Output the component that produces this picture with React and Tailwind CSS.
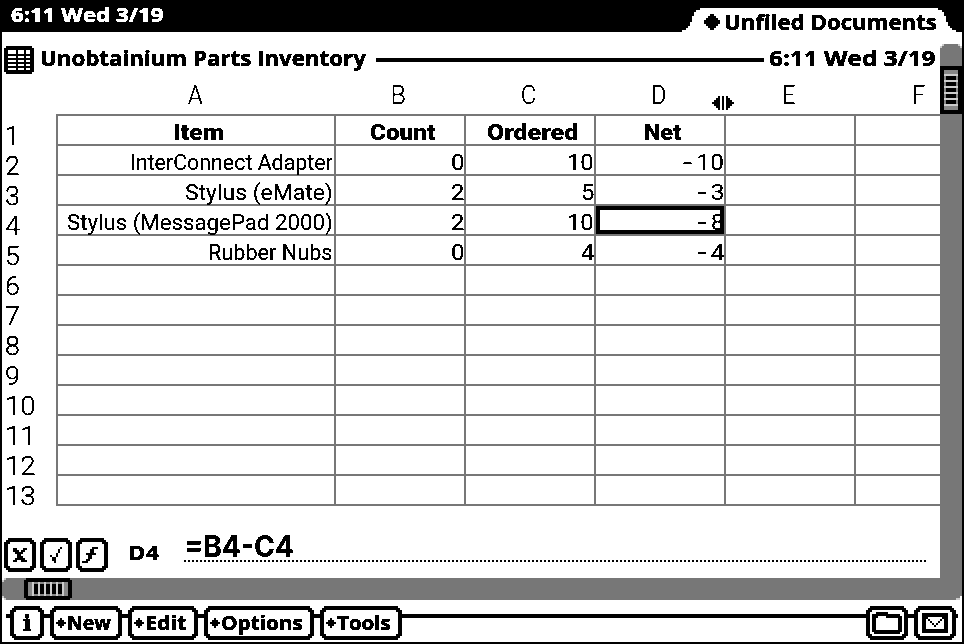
import React, { useLayoutEffect, useRef, useState } from "react";

// Text stretched horizontally so that it fills exactly `w` pixels.
// The #bitmap filter drops the anti-aliasing for a one-bit LCD look.
function Fit({ w, className = "", children }) {
  const ref = useRef(null);
  const [k, setK] = useState(1);
  useLayoutEffect(() => {
    setK(w / ref.current.offsetWidth);
  }, [w]);
  return (
    <span className="inline-flex shrink-0 justify-start whitespace-pre [filter:url(#bitmap)]" style={{ width: w }}>
      <span ref={ref} className={"block shrink-0 origin-left " + className} style={{ transform: `scaleX(${k})` }}>
        {children}
      </span>
    </span>
  );
}

const UI = "font-['Open_Sans',sans-serif] font-bold [-webkit-text-stroke:0.3px_currentColor]";
const CELL = "font-['Roboto',sans-serif]";
const LABEL = "font-['Roboto',sans-serif] text-[25px] font-light leading-[30px] [-webkit-text-stroke:0.15px_black]";

const columns = [
  { name: "A", width: "w-[278px]", w: 15 },
  { name: "B", width: "w-[130px]", w: 15 },
  { name: "C", width: "w-[130px]", w: 15 },
  { name: "D", width: "w-[130px]", w: 15 },
  { name: "E", width: "w-[130px]", w: 13 },
  { name: "F", width: "w-[130px]", w: 13 },
];

const data = [
  [["Item", 51], ["Count", 65], ["Ordered", 91], ["Net", 37]],
  [["InterConnect Adapter", 203], ["0", 13], ["10", 27], ["-10", 42]],
  [["Stylus (eMate)", 148], ["2", 13], ["5", 13], ["-3", 28]],
  [["Stylus (MessagePad 2000)", 266], ["2", 13], ["10", 27], ["-8", 28]],
  [["Rubber Nubs", 125], ["0", 13], ["4", 13], ["-4", 28]],
];

// Stair-stepped outline shared by all the buttons.
function Frame({ w, h = 34, children, className = "" }) {
  const outer = `M4 0H${w - 4}V2H${w - 2}V4H${w}V${h - 4}H${w - 2}V${h - 2}H${w - 4}V${h}H4V${h - 2}H2V${h - 4}H0V4H2V2H4Z`;
  const inner = `M6 4H${w - 6}V6H${w - 4}V${h - 6}H${w - 6}V${h - 4}H6V${h - 6}H4V6H6Z`;
  return (
    <div className={"relative flex shrink-0 items-center " + className} style={{ width: w, height: h }}>
      <svg className="absolute inset-0" width={w} height={h} shapeRendering="crispEdges">
        <path d={outer} />
        <path d={inner} fill="white" />
      </svg>
      <div className="relative flex h-full w-full items-center">{children}</div>
    </div>
  );
}

function MenuButton({ w, tw, label }) {
  return (
    <Frame w={w}>
      <svg className="ml-[6px] shrink-0" width="10" height="10" viewBox="0 0 5 5" shapeRendering="crispEdges">
        <path d="M2 0h1v1h1v1h1v1h-1v1h-1v1h-1v-1h-1v-1h-1v-1h1v-1h1z" />
      </svg>
      <span className="ml-[1px] flex"><Fit w={tw} className={UI + " text-[19px] leading-[32px]"}>{label}</Fit></span>
    </Frame>
  );
}

export default function App() {
  return (
    <div className="flex h-[644px] w-[964px] flex-col overflow-hidden bg-black text-black">
      <svg className="absolute" width="0" height="0">
        <filter id="bitmap" x="-5%" y="-5%" width="110%" height="110%" colorInterpolationFilters="sRGB">
          <feComponentTransfer>
            <feFuncA type="discrete" tableValues="0 0 1 1 1" />
          </feComponentTransfer>
        </filter>
      </svg>

      <header className="flex h-8 shrink-0 items-end justify-between text-white">
        <div className="flex h-8 items-start pl-[11px]">
          <Fit w={152} className={UI + " text-[19.5px] leading-[30px]"}>6:11 Wed 3/19</Fit>
        </div>
        <div className="relative mr-[2px] h-6 w-[280px] shrink-0 text-black">
          <svg className="absolute inset-0" width="280" height="24" shapeRendering="crispEdges">
            <path fill="white" d="M0 24V22H4V20H6V18H8V14H10V8H12V4H14V2H18V0H256V2H260V4H262V8H264V14H266V18H268V20H270V22H274V24Z" />
          </svg>
          <div className="relative flex h-full items-start pl-[22px]">
            <svg className="mt-[6px]" width="16" height="16" viewBox="0 0 8 8" shapeRendering="crispEdges">
              <path d="M3 0h2v1h1v1h1v1h1v2h-1v1h-1v1h-1v1h-2v-1h-1v-1h-1v-1h-1v-2h1v-1h1v-1h1z" />
            </svg>
            <span className="ml-[4px] flex pt-[1px]"><Fit w={213} className={UI + " text-[22px] leading-[24px]"}>Unfiled Documents</Fit></span>
          </div>
        </div>
      </header>

      <div className="mx-[2px] flex h-[546px] shrink-0 bg-white">
        <main className="flex w-[938px] flex-col">
          <div className="flex h-[48px] items-start pl-[2px] pt-[8px]">
            <svg className="mt-[6px]" width="30" height="28" viewBox="0 0 15 14" shapeRendering="crispEdges">
              <path d="M1 0h13v1h1v12h-1v1h-13v-1h-1v-12h1z" />
              <path fill="white" d="M2 2h4v2h-4zM7 2h3v2h-3zM11 2h2v2h-2zM2 5h4v1h-4zM7 5h3v1h-3zM11 5h2v1h-2zM2 7h4v1h-4zM7 7h3v1h-3zM11 7h2v1h-2zM2 9h4v1h-4zM7 9h3v1h-3zM11 9h2v1h-2zM2 11h4v1h-4zM7 11h3v1h-3zM11 11h2v1h-2z" />
            </svg>
            <span className="ml-[6px] flex"><Fit w={326} className={UI + " text-[22px] leading-[34px]"}>Unobtainium Parts Inventory</Fit></span>
            <span className="ml-[10px] mr-[5px] mt-[18px] h-1 flex-1 bg-black" />
            <span className="mr-[5px] flex"><Fit w={166} className={UI + " text-[22px] leading-[34px]"}>6:11 Wed 3/19</Fit></span>
          </div>

          <div className="relative flex h-[34px] overflow-hidden pl-[54px]">
            {columns.map((c, i) => (
              <div key={c.name} className={"flex shrink-0 justify-center pt-[1px] " + (i === 0 ? "" : "pr-[2px] ") + c.width}>
                <Fit w={c.w} className={LABEL}>{c.name}</Fit>
              </div>
            ))}
            <svg className="absolute left-[710px] top-[16px]" width="22" height="14" viewBox="0 0 11 7" shapeRendering="crispEdges">
              <path d="M3 0h1v7h-1v-1h-1v-1h-1v-1h-1v-1h1v-1h1v-1h1zM5 0h1v7h-1zM7 0h1v1h1v1h1v1h1v1h-1v1h-1v1h-1v1h-1z" />
            </svg>
          </div>

          <div className="flex h-[392px]">
            <div className="flex w-[54px] flex-col pl-[3px] pt-[8px]">
              {Array.from({ length: 13 }, (_, i) => (
                <div key={i} className="h-[30px]">
                  <Fit w={i > 8 ? 31 : 15} className={LABEL}>{i + 1}</Fit>
                </div>
              ))}
            </div>
            <div className="w-[884px] overflow-hidden border-l-2 border-t-2 border-[#777]">
              {Array.from({ length: 13 }, (_, r) => (
                <div key={r} className="flex h-[30px] w-[940px]">
                  {columns.map((c, i) => {
                    const cell = data[r]?.[i];
                    const negative = cell && cell[0][0] === "-";
                    return (
                      <div key={c.name} className={"relative flex shrink-0 border-b-2 border-r-2 border-[#777] " + (r === 0 ? "justify-center pl-[4px] " : i === 0 ? "justify-end pr-px " : "justify-end ") + c.width}>
                        {cell && (
                          <Fit w={cell[1]} className={CELL + " text-[22px] leading-[33px] " + (r === 0 ? "font-black" : "font-normal")}>
                            {negative && <span className="ml-[2px] mr-[5px] inline-block scale-x-[1.4]">-</span>}
                            {negative ? cell[0].slice(1) : cell[0]}
                          </Fit>
                        )}
                        {r === 3 && i === 3 && <span className="absolute inset-0 border-4 border-black" />}
                      </div>
                    );
                  })}
                </div>
              ))}
            </div>
          </div>

          <div className="flex h-[72px] items-start pl-[2px] pt-[32px]">
            <div className="flex gap-1">
              <Frame w={32}>
                <svg className="ml-[9px]" width="14" height="14" viewBox="0 0 7 7" shapeRendering="crispEdges">
                  <path d="M0 0h2v1h-2zM5 0h2v1h-2zM0 1h3v1h-3zM4 1h2v1h-2zM1 2h4v1h-4zM2 3h2v1h-2zM2 4h3v1h-3zM1 5h5v1h-5zM0 6h2v1h-2zM4 6h3v1h-3z" />
                </svg>
              </Frame>
              <Frame w={32}>
                <svg className="ml-[10px]" width="12" height="16" viewBox="0 0 6 8" shapeRendering="crispEdges">
                  <path d="M5 0h1v1h-1zM4 1h1v2h-1zM3 3h1v2h-1zM2 5h1v3h-1zM1 5h1v2h-1zM0 4h1v1h-1z" />
                </svg>
              </Frame>
              <Frame w={32}>
                <svg className="ml-[6px]" width="16" height="16" viewBox="0 0 8 8" shapeRendering="crispEdges">
                  <path d="M5 0h3v1h-3zM4 1h2v1h-2zM4 2h2v1h-2zM2 3h5v1h-5zM3 4h2v1h-2zM3 5h2v1h-2zM2 6h2v1h-2zM0 7h3v1h-3z" />
                </svg>
              </Frame>
            </div>
            <span className="ml-[20px] flex"><Fit w={31} className={UI + " text-[19px] leading-[31px]"}>D4</Fit></span>
            <div className="-mt-[9px] ml-[25px] flex w-[742px] flex-col">
              <Fit w={110} className="h-[31px] font-['Inter',sans-serif] text-[30px] font-bold leading-[35px]">=B4-C4</Fit>
              <span className="h-[2px] bg-[repeating-linear-gradient(90deg,#000_0_2px,transparent_2px_4px)]" />
            </div>
          </div>
        </main>

        <aside className="flex w-[22px] flex-col pt-[12px]">
          <svg width="22" height="70" viewBox="0 0 11 35" shapeRendering="crispEdges">
            <path fill="#777" d="M0 2h1v-1h1v-1h7v1h1v1h1v33h-11z" />
            <path fill="#ccc" d="M0 1h1v1h-1zM1 0h1v1h-1zM9 0h1v1h-1zM10 1h1v1h-1z" />
            <path d="M0 11h11v24h-11z" />
            <path fill="#888" d="M2 13h7v20h-7z" />
            <path fill="#ccc" d="M2 15h7v1h-7zM2 18h7v1h-7zM2 21h7v1h-7zM2 24h7v1h-7zM2 27h7v1h-7zM2 30h7v1h-7z" />
            <path d="M3 16h5v2h-5zM3 19h5v2h-5zM3 22h5v2h-5zM3 25h5v2h-5zM3 28h5v2h-5z" />
          </svg>
          <div className="w-full flex-1 bg-[#777]" />
        </aside>
      </div>

      <div className="mx-[2px] flex h-[22px] shrink-0 bg-[#777]">
        <svg width="70" height="22" viewBox="0 0 35 11" shapeRendering="crispEdges">
          <path fill="white" d="M0 0h1v1h-1zM0 10h1v1h-1z" />
          <path fill="#ccc" d="M1 0h1v1h-1zM0 1h1v1h-1zM1 10h1v1h-1zM0 9h1v1h-1z" />
          <path d="M12 0h22v1h1v9h-1v1h-22v-1h-1v-9h1z" />
          <path fill="#888" d="M13 2h20v7h-20z" />
          <path fill="#ccc" d="M15 2h1v7h-1zM18 2h1v7h-1zM21 2h1v7h-1zM24 2h1v7h-1zM27 2h1v7h-1zM30 2h1v7h-1z" />
          <path d="M16 3h2v5h-2zM19 3h2v5h-2zM22 3h2v5h-2zM25 3h2v5h-2zM28 3h2v5h-2z" />
        </svg>
        <svg className="ml-auto self-end" width="6" height="4" viewBox="0 0 3 2" shapeRendering="crispEdges">
          <path fill="white" d="M2 0h1v2h-1z" />
          <path fill="#ccc" d="M0 1h2v1h-2z" />
        </svg>
      </div>

      <footer className="mx-[2px] flex h-[42px] shrink-0 items-start bg-white pl-1 pr-1 pt-[6px]">
        <span className="mt-2 h-1 w-1 bg-black" />
        <Frame w={34}>
          <span className="w-full text-center font-['DejaVu_Serif',serif] text-[23px] font-bold leading-[34px] [-webkit-text-stroke:0.6px_black] [filter:url(#bitmap)]">i</span>
        </Frame>
        <span className="mt-2 h-1 w-[6px] bg-black" />
        <MenuButton w={72} tw={44} label="New" />
        <span className="mt-2 h-1 w-[6px] bg-black" />
        <MenuButton w={70} tw={42} label="Edit" />
        <span className="mt-2 h-1 w-[6px] bg-black" />
        <MenuButton w={110} tw={82} label="Options" />
        <span className="mt-2 h-1 w-[6px] bg-black" />
        <MenuButton w={82} tw={54} label="Tools" />
        <span className="mt-2 h-1 flex-1 bg-black" />
        <Frame w={42}>
          <svg className="ml-[6px]" width="30" height="22" viewBox="0 0 15 11" shapeRendering="crispEdges">
            <path d="M2 0h6v1h6v1h1v8h-1v1h-13v-1h-1v-9h2z" />
            <path fill="white" d="M3 2h4v1h6v6h-11v-6h1z" />
          </svg>
        </Frame>
        <span className="mt-2 h-1 w-[6px] bg-black" />
        <Frame w={42}>
          <svg className="ml-[8px]" width="26" height="20" viewBox="0 0 13 10" shapeRendering="crispEdges">
            <path d="M0 0h13v10h-13z" />
            <path fill="white" d="M3 2h7v1h-1v1h-1v1h-1v1h-1v-1h-1v-1h-1v-1h-1zM2 3h1v1h1v1h1v1h1v1h1v-1h1v-1h1v-1h1v-1h1v5h-9z" />
          </svg>
        </Frame>
        <span className="mt-2 h-1 w-[2px] bg-black" />
      </footer>
    </div>
  );
}
